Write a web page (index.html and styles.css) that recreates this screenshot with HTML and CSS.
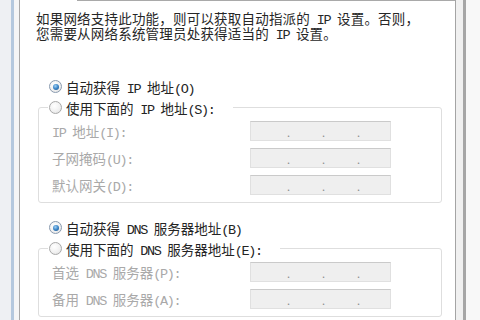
FILE: index.html
```html
<!DOCTYPE html>
<html lang="zh-CN">
<head>
<meta charset="utf-8">
<title>IPv4 属性</title>
<link rel="stylesheet" href="styles.css">
</head>
<body>
<div class="frame-left"><div class="f1"></div><div class="f2"></div><div class="f3"></div></div>
<div class="panel">
  <div class="tabtop"><div class="tabgap"></div><div class="tabline"></div></div>
  <div class="content">
    <p class="intro">如果网络支持此功能，则可以获取自动指派的<span class="a"> IP </span>设置。否则，<br>您需要从网络系统管理员处获得适当的<span class="a"> IP </span>设置。</p>

    <div class="opt first"><span class="radio checked"></span><span>自动获得<span class="a"> IP </span>地址<span class="a">(O)</span></span></div>
    <fieldset class="group">
      <legend><span class="opt leg"><span class="radio"></span><span>使用下面的<span class="a"> IP </span>地址<span class="a">(S):</span></span></span></legend>
      <div class="row"><span class="lbl"><span class="a">IP </span>地址<span class="a">(I):</span></span><span class="ip"><i>.</i><i>.</i><i>.</i></span></div>
      <div class="row"><span class="lbl">子网掩码<span class="a">(U):</span></span><span class="ip"><i>.</i><i>.</i><i>.</i></span></div>
      <div class="row"><span class="lbl">默认网关<span class="a">(D):</span></span><span class="ip"><i>.</i><i>.</i><i>.</i></span></div>
    </fieldset>

    <div class="opt dns"><span class="radio checked"></span><span>自动获得<span class="a"> DNS </span>服务器地址<span class="a">(B)</span></span></div>
    <fieldset class="group">
      <legend><span class="opt leg"><span class="radio"></span><span>使用下面的<span class="a"> DNS </span>服务器地址<span class="a">(E):</span></span></span></legend>
      <div class="row"><span class="lbl">首选<span class="a"> DNS </span>服务器<span class="a">(P):</span></span><span class="ip"><i>.</i><i>.</i><i>.</i></span></div>
      <div class="row"><span class="lbl">备用<span class="a"> DNS </span>服务器<span class="a">(A):</span></span><span class="ip"><i>.</i><i>.</i><i>.</i></span></div>
    </fieldset>
  </div>
</div>
<div class="frame-right"><div class="r1"></div><div class="r2"></div><div class="r3"></div></div>
</body>
</html>
```

FILE: styles.css
```css
html, body {
  margin: 0;
  padding: 0;
}
body {
  width: 480px;
  height: 320px;
  overflow: hidden;
  display: flex;
  background: #ffffff;
  font-family: "Noto Sans CJK SC", "Liberation Mono", sans-serif;
  font-size: 13.5px;
  color: #222222;
}
.a {
  font-family: "Liberation Mono", monospace;
  letter-spacing: -0.1em;
}
.frame-left {
  display: flex;
  width: 19px;
  flex: none;
}
.frame-left .f1 { width: 11px; background: #eef0f3; }
.frame-left .f2 { width: 3px; background: #b4c8de; }
.frame-left .f3 { width: 5px; background: #f4f5f6; }

.panel {
  width: 435px;
  flex: none;
  border-left: 1px solid #a8a8a8;
  border-right: 1px solid #a4a4a4;
  display: flex;
  flex-direction: column;
}
.tabtop {
  display: flex;
  height: 1px;
}
.tabgap { width: 57px; }
.tabline { flex: 1; background: #a9a9a9; }

.content {
  padding: 11px 13px 0 16px;
}
.intro {
  margin: 0;
  height: 26px;
  line-height: 13px;
  color: #262626;
  white-space: nowrap;
  letter-spacing: 0.2px;
}
.opt {
  display: flex;
  align-items: center;
  gap: 4px;
  height: 21px;
  padding-left: 13px;
  white-space: nowrap;
  color: #242424;
}
.opt.first { margin-top: 38px; }
.opt.dns { margin-top: 14px; }
.opt.leg { padding-left: 1px; }

.radio {
  width: 11px;
  height: 11px;
  border: 1px solid #a9a9a9;
  border-radius: 50%;
  background: radial-gradient(circle at 40% 35%, #ffffff 0%, #f1f1f1 55%, #dcdcdc 100%);
  display: flex;
  align-items: center;
  justify-content: center;
  flex: none;
}
.radio.checked {
  border-color: #8a9bb0;
}
.radio.checked::after {
  content: "";
  width: 6px;
  height: 6px;
  border-radius: 50%;
  background: radial-gradient(circle at 40% 35%, #9fd0f5 0%, #3a84c6 50%, #1b4f86 100%);
}

.group {
  margin: 0 0 0 2px;
  padding: 3px 0 7px 13px;
  border: 1px solid #dedede;
  border-radius: 3px;
  display: flex;
  flex-direction: column;
  gap: 7px;
}
.group legend {
  padding: 0 18px 0 0;
  margin-left: -4px;
}
.row {
  display: flex;
  align-items: center;
  height: 20px;
}
.lbl {
  width: 198px;
  flex: none;
  color: #a9a9a9;
  white-space: nowrap;
}
.ip {
  width: 135px;
  height: 18px;
  padding-left: 4px;
  border: 1px solid #e0e0e0;
  border-top-color: #cacaca;
  background: #efefef;
  display: flex;
}
.ip i {
  font-style: normal;
  width: 35px;
  text-align: right;
  color: #8c8c8c;
  font-size: 11px;
  line-height: 20px;
}

.frame-right {
  flex: 1;
  display: flex;
}
.frame-right .r1 { width: 7px; background: #f0f0f0; }
.frame-right .r2 { width: 3px; background: #a6a6a6; }
.frame-right .r3 { flex: 1; background: #f8f8f8; }
```
